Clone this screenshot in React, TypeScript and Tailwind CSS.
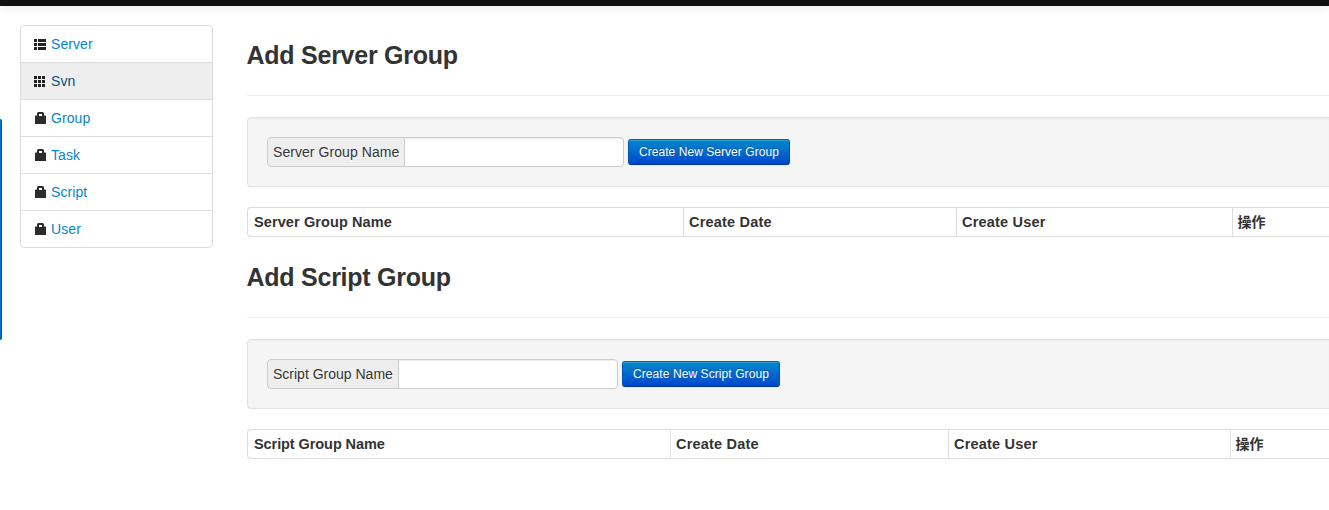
import React from "react";

function ListIcon() {
  return (
    <svg width="14" height="14" viewBox="0 0 14 14" fill="#222" shapeRendering="crispEdges">
      <path d="M1 2h3v3H1zM5 2h8v3H5zM1 6h3v3H1zM5 6h8v3H5zM1 10h3v3H1zM5 10h8v3H5z" />
    </svg>
  );
}

function GridIcon() {
  return (
    <svg width="14" height="14" viewBox="0 0 14 14" fill="#222" shapeRendering="crispEdges">
      <path d="M1 2h3v3H1zM5 2h3v3H5zM9 2h3v3H9zM1 6h3v3H1zM5 6h3v3H5zM9 6h3v3H9zM1 10h3v3H1zM5 10h3v3H5zM9 10h3v3H9z" />
    </svg>
  );
}

function LockIcon() {
  return (
    <svg width="14" height="14" viewBox="0 0 14 14" fill="#2b2b2b">
      <path
        fillRule="evenodd"
        d="M4 4.5V2.5Q4 1 5.5 1H9.5Q11 1 11 2.5V4.5H12.5Q13 4.5 13 5V13H2V5Q2 4.5 2.5 4.5zM6 5H9V3.3Q9 3 8.7 3H6.3Q6 3 6 3.3z"
      />
    </svg>
  );
}

const navItems = [
  { label: "Server", Icon: ListIcon },
  { label: "Svn", Icon: GridIcon, active: true },
  { label: "Group", Icon: LockIcon },
  { label: "Task", Icon: LockIcon },
  { label: "Script", Icon: LockIcon },
  { label: "User", Icon: LockIcon },
];

function Sidebar() {
  return (
    <nav className="w-[193px] shrink-0 overflow-hidden rounded-[4px] border border-[#ddd] bg-white">
      {navItems.map(({ label, Icon, active }, i) => (
        <a
          key={label}
          href="#"
          className={`flex items-center gap-1 pl-3 leading-5 tracking-[0.08px] ${i > 0 ? "h-[37px] border-t border-[#ddd]" : "h-9"} ${
            active ? "bg-[#eee] text-[#005580]" : "text-[#0088cc]"
          }`}
        >
          <Icon />
          <span>{label}</span>
        </a>
      ))}
    </nav>
  );
}

interface GroupSectionProps {
  kind: string;
  columns: string;
  labelClass: string;
  firstHeaderClass: string;
  buttonClass: string;
}

function GroupSection({ kind, columns, labelClass, firstHeaderClass, buttonClass }: GroupSectionProps) {
  const headers = [
    { text: `${kind} Group Name`, style: firstHeaderClass },
    { text: "Create Date", style: "border-l pl-[5px] text-[14.5px] tracking-[0.2px]" },
    { text: "Create User", style: "border-l pl-[5px] text-[14.5px] tracking-[0.2px]" },
    { text: "操作", style: "border-l pl-[4.5px]" },
  ];
  return (
    <section className="mb-5">
      <h3 className="-ml-[0.5px] pt-px text-[25px] leading-[39px] font-bold tracking-[-0.25px]">Add {kind} Group</h3>
      <hr className="mt-5 mb-[21px] border-t border-[#eee]" />
      <form className="flex h-[70px] items-center rounded-l-[4px] border border-r-0 border-[#e3e3e3] bg-[#f5f5f5] pl-[19px] shadow-[inset_0_1px_1px_rgba(0,0,0,0.05)]">
        <label className="flex h-[30px]">
          <span
            className={`flex items-center rounded-l-[4px] border border-[#ccc] bg-[#eee] pl-[5px] leading-5 whitespace-nowrap [text-shadow:0_1px_0_#fff] ${labelClass}`}
          >
            {kind} Group Name
          </span>
          <input
            type="text"
            className="-ml-px w-[220px] rounded-r-[4px] border border-[#ccc] bg-white px-1.5 shadow-[inset_0_1px_1px_rgba(0,0,0,0.075)] outline-none"
          />
        </label>
        <button
          type="button"
          className={`ml-1 h-[26px] rounded-[3px] border border-[#0055b3] border-t-[#0062aa] border-b-[#003a90] bg-linear-to-b from-[#0088cc] to-[#0044cc] pl-[10px] text-left text-[12px] leading-5 whitespace-nowrap text-white shadow-[inset_0_1px_0_rgba(255,255,255,0.2),0_1px_2px_rgba(0,0,0,0.05)] [text-shadow:0_-1px_0_rgba(0,0,0,0.25)] ${buttonClass}`}
        >
          Create New {kind} Group
        </button>
      </form>
      <div className={`mt-5 grid h-[30px] rounded-l-[4px] border border-r-0 border-[#ddd] ${columns}`}>
        {headers.map(({ text, style }) => (
          <div key={text} className={`flex items-center border-[#ddd] leading-5 font-bold ${style}`}>
            {text}
          </div>
        ))}
      </div>
    </section>
  );
}

export default function App() {
  return (
    <div className="relative flex h-[510px] flex-col overflow-hidden bg-white text-[14px] text-[#333] [font-family:'Liberation_Sans','Noto_Sans_CJK_SC',sans-serif]">
      <header className="h-1.5 shrink-0 bg-[#111] shadow-[0_1px_10px_rgba(0,0,0,0.1)]" />
      <div className="absolute top-[119px] left-0 h-[221px] w-0.5 rounded-r-[2px] border-r border-[#0055a5] bg-[#0074cc]" />
      <div className="flex items-start pt-[19px] pl-5">
        <Sidebar />
        <main className="ml-[34px] min-w-0 flex-1 pt-[10px]">
          <GroupSection
            kind="Server"
            columns="grid-cols-[435px_273px_276px_1fr]"
            labelClass="w-[138px] tracking-[0.06px]"
            firstHeaderClass="pl-[6px] text-[14.5px] tracking-[0.1px]"
            buttonClass="w-[162px] tracking-[0.05px]"
          />
          <GroupSection
            kind="Script"
            columns="grid-cols-[422px_278px_282px_1fr]"
            labelClass="w-[132px]"
            firstHeaderClass="pl-[6px] text-[14.5px] tracking-[-0.08px]"
            buttonClass="w-[158px] tracking-[0.08px]"
          />
        </main>
      </div>
    </div>
  );
}
